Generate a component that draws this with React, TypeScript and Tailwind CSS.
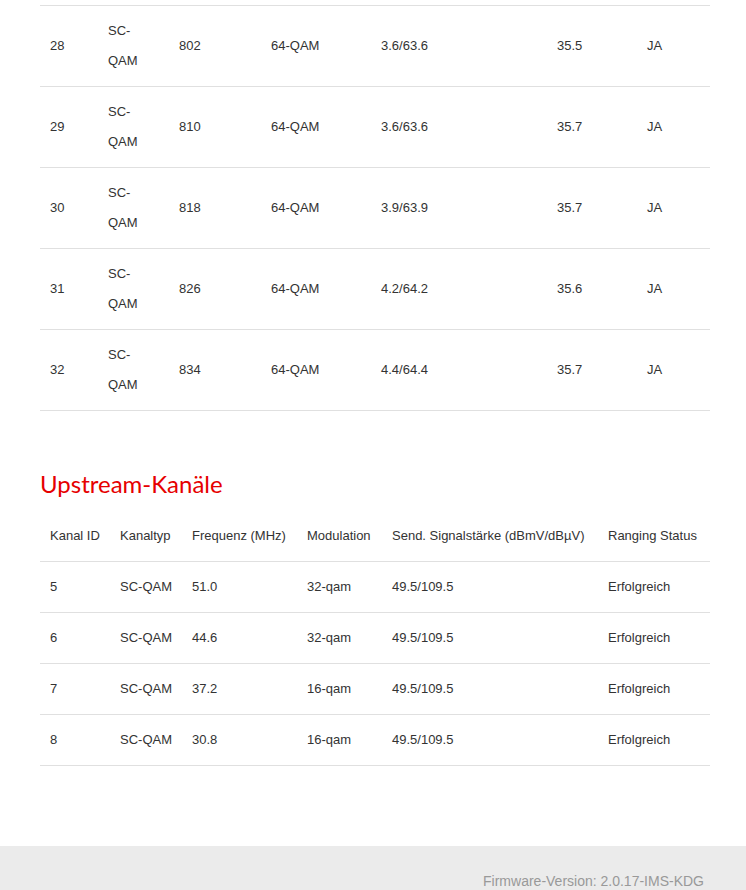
const downstream = [
  { id: '28', freq: '802', mod: '64-QAM', power: '3.6/63.6', snr: '35.5', locked: 'JA' },
  { id: '29', freq: '810', mod: '64-QAM', power: '3.6/63.6', snr: '35.7', locked: 'JA' },
  { id: '30', freq: '818', mod: '64-QAM', power: '3.9/63.9', snr: '35.7', locked: 'JA' },
  { id: '31', freq: '826', mod: '64-QAM', power: '4.2/64.2', snr: '35.6', locked: 'JA' },
  { id: '32', freq: '834', mod: '64-QAM', power: '4.4/64.4', snr: '35.7', locked: 'JA' },
];

const upstream = [
  { id: '5', type: 'SC-QAM', freq: '51.0', mod: '32-qam', power: '49.5/109.5', status: 'Erfolgreich' },
  { id: '6', type: 'SC-QAM', freq: '44.6', mod: '32-qam', power: '49.5/109.5', status: 'Erfolgreich' },
  { id: '7', type: 'SC-QAM', freq: '37.2', mod: '16-qam', power: '49.5/109.5', status: 'Erfolgreich' },
  { id: '8', type: 'SC-QAM', freq: '30.8', mod: '16-qam', power: '49.5/109.5', status: 'Erfolgreich' },
];

const upHeaders = ['Kanal ID', 'Kanaltyp', 'Frequenz (MHz)', 'Modulation', 'Send. Signalstärke (dBmV/dBµV)', 'Ranging Status'];

export default function App() {
  return (
    <div className="min-h-[890px] bg-white text-[13px] leading-[30px] text-[#333] font-['Liberation_Sans',Arial,sans-serif]">
      <div className="ml-10 mr-9">
        {/* Downstream (Rest der Tabelle) */}
        <div className="h-[6px] border-b border-[#e0e0e0]" />
        {downstream.map((r) => (
          <div
            key={r.id}
            className="grid grid-cols-[58px_71px_92px_110px_176px_90px_73px] items-center border-b border-[#e0e0e0]"
          >
            <div className="px-[10px] py-[10px]">{r.id}</div>
            <div className="px-[10px] py-[10px]">
              SC-
              <br />
              QAM
            </div>
            <div className="px-[10px] py-[10px]">{r.freq}</div>
            <div className="px-[10px] py-[10px]">{r.mod}</div>
            <div className="px-[10px] py-[10px]">{r.power}</div>
            <div className="px-[10px] py-[10px]">{r.snr}</div>
            <div className="px-[10px] py-[10px]">{r.locked}</div>
          </div>
        ))}

        {/* Upstream */}
        <h2 className="mt-[58px] mb-[12px] h-[30px] leading-[30px] text-[24px] text-[#e60000] font-['Lato','Open_Sans',sans-serif]">
          Upstream-Kanäle
        </h2>
        <div className="grid grid-cols-[70px_72px_115px_85px_216px_112px] border-b border-[#e0e0e0]">
          {upHeaders.map((h) => (
            <div key={h} className="px-[10px] py-[10px] whitespace-nowrap">
              {h}
            </div>
          ))}
        </div>
        {upstream.map((r) => (
          <div
            key={r.id}
            className="grid grid-cols-[70px_72px_115px_85px_216px_112px] border-b border-[#e0e0e0]"
          >
            <div className="px-[10px] py-[10px]">{r.id}</div>
            <div className="px-[10px] py-[10px]">{r.type}</div>
            <div className="px-[10px] py-[10px]">{r.freq}</div>
            <div className="px-[10px] py-[10px]">{r.mod}</div>
            <div className="px-[10px] py-[10px]">{r.power}</div>
            <div className="px-[10px] py-[10px]">{r.status}</div>
          </div>
        ))}
      </div>

      {/* Footer */}
      <footer className="mt-[80px] bg-[#ebebeb] pt-[25px] pb-6 pr-[42px] text-right text-[14px] leading-5 text-[#999]">
        Firmware-Version: 2.0.17-IMS-KDG
      </footer>
    </div>
  );
}
